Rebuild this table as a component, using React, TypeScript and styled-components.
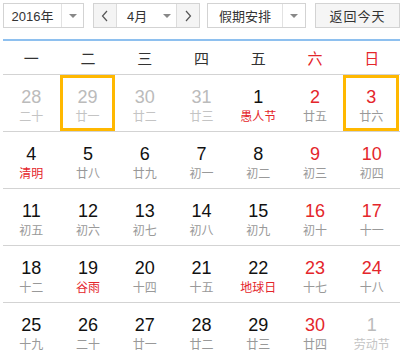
import styled, { createGlobalStyle } from 'styled-components';

const GlobalStyle = createGlobalStyle`
  html, body {
    margin: 0;
    padding: 0;
    background: #fff;
    font-family: 'Liberation Sans', 'Noto Sans CJK SC', Arial, sans-serif;
  }
`;

const RED = '#e4262b';

const Calendar = styled.div`
  width: 397px;
  padding: 3px 6px 0 3px;
`;

const Toolbar = styled.div`
  display: flex;
  height: 25px;
`;

const Select = styled.div<{ $width: number; $gap: number }>`
  display: flex;
  width: ${(p) => p.$width}px;
  margin-right: ${(p) => p.$gap}px;
  box-sizing: border-box;
  border: 1px solid #d3d3d3;
  background: #fff;
  font-size: 13px;
  color: #333;
`;

const SelectLabel = styled.div<{ $width: number }>`
  width: ${(p) => p.$width}px;
  display: flex;
  align-items: center;
  justify-content: center;
  border-right: 1px solid #e2e2e2;
`;

const Caret = styled.div`
  flex: 1;
  display: flex;
  align-items: center;
  justify-content: center;
  &::after {
    content: '';
    border-left: 4px solid transparent;
    border-right: 4px solid transparent;
    border-top: 4px solid #888;
  }
`;

const MonthGroup = styled.div`
  display: flex;
  width: 107px;
  margin-right: 7px;
  box-sizing: border-box;
  border: 1px solid #d3d3d3;
  font-size: 13px;
  color: #333;
`;

const Step = styled.div<{ $side: 'l' | 'r' }>`
  width: 22px;
  display: flex;
  align-items: center;
  justify-content: center;
  background: #f4f4f4;
  ${(p) => (p.$side === 'l' ? 'border-right: 1px solid #dcdcdc;' : 'border-left: 1px solid #dcdcdc;')}
`;

const MonthLabel = styled.div`
  flex: 1;
  display: flex;
  align-items: center;
  background: #fff;
  padding-left: 10px;
  gap: 16px;
  &::after {
    content: '';
    border-left: 4px solid transparent;
    border-right: 4px solid transparent;
    border-top: 4px solid #888;
  }
`;

const TodayButton = styled.button`
  width: 85px;
  height: 25px;
  padding: 0;
  border: 1px solid #d3d3d3;
  background: #f5f5f5;
  font-family: inherit;
  font-size: 13px;
  color: #333;
  letter-spacing: 1px;
`;

const WeekHead = styled.div`
  display: grid;
  grid-template-columns: repeat(7, 1fr);
  margin-top: 11px;
  border-top: 2px solid #8ec0ef;
  height: 33px;
`;

const WeekDay = styled.div<{ $red?: boolean }>`
  display: flex;
  align-items: center;
  justify-content: center;
  font-size: 15px;
  color: ${(p) => (p.$red ? RED : '#333')};
`;

const Row = styled.div`
  display: grid;
  grid-template-columns: repeat(7, 1fr);
  border-top: 1px solid #d3d3d3;
  height: 56px;
`;

const Cell = styled.div<{ $active?: boolean }>`
  box-sizing: border-box;
  display: flex;
  flex-direction: column;
  align-items: center;
  padding-top: ${(p) => (p.$active ? 8 : 11)}px;
  border: ${(p) => (p.$active ? '3px solid #ffb800' : 'none')};
  margin: 0 ${(p) => (p.$active ? 1 : 0)}px 0 0;
`;

const Num = styled.div<{ $tone: 'n' | 'r' | 'o' }>`
  font-size: 18px;
  line-height: 22px;
  color: ${(p) => (p.$tone === 'r' ? RED : p.$tone === 'o' ? '#bbbbbb' : '#111')};
`;

const Lunar = styled.div<{ $tone: 'n' | 'r' | 'o' }>`
  font-size: 12px;
  line-height: 16px;
  margin-top: 1px;
  color: ${(p) => (p.$tone === 'r' ? RED : p.$tone === 'o' ? '#c4c4c4' : '#999')};
`;

type Day = { d: number; l: string; other?: boolean; fest?: boolean; active?: boolean };

const rows: Day[][] = [
  [
    { d: 28, l: '二十', other: true },
    { d: 29, l: '廿一', other: true, active: true },
    { d: 30, l: '廿二', other: true },
    { d: 31, l: '廿三', other: true },
    { d: 1, l: '愚人节', fest: true },
    { d: 2, l: '廿五' },
    { d: 3, l: '廿六', active: true },
  ],
  [
    { d: 4, l: '清明', fest: true },
    { d: 5, l: '廿八' },
    { d: 6, l: '廿九' },
    { d: 7, l: '初一' },
    { d: 8, l: '初二' },
    { d: 9, l: '初三' },
    { d: 10, l: '初四' },
  ],
  [
    { d: 11, l: '初五' },
    { d: 12, l: '初六' },
    { d: 13, l: '初七' },
    { d: 14, l: '初八' },
    { d: 15, l: '初九' },
    { d: 16, l: '初十' },
    { d: 17, l: '十一' },
  ],
  [
    { d: 18, l: '十二' },
    { d: 19, l: '谷雨', fest: true },
    { d: 20, l: '十四' },
    { d: 21, l: '十五' },
    { d: 22, l: '地球日', fest: true },
    { d: 23, l: '十七' },
    { d: 24, l: '十八' },
  ],
  [
    { d: 25, l: '十九' },
    { d: 26, l: '二十' },
    { d: 27, l: '廿一' },
    { d: 28, l: '廿二' },
    { d: 29, l: '廿三' },
    { d: 30, l: '廿四' },
    { d: 1, l: '劳动节', other: true },
  ],
];

const weekdays = ['一', '二', '三', '四', '五', '六', '日'];

function Chevron({ dir }: { dir: 'l' | 'r' }) {
  return (
    <svg width="8" height="12" viewBox="0 0 8 12">
      <polyline
        points={dir === 'l' ? '6,1 1.5,6 6,11' : '2,1 6.5,6 2,11'}
        fill="none"
        stroke="#555"
        strokeWidth="1.2"
      />
    </svg>
  );
}

export default function App() {
  return (
    <>
      <GlobalStyle />
      <Calendar>
        <Toolbar>
          <Select $width={81} $gap={9}>
            <SelectLabel $width={57}>2016年</SelectLabel>
            <Caret />
          </Select>
          <MonthGroup>
            <Step $side="l">
              <Chevron dir="l" />
            </Step>
            <MonthLabel>4月</MonthLabel>
            <Step $side="r">
              <Chevron dir="r" />
            </Step>
          </MonthGroup>
          <Select $width={99} $gap={9}>
            <SelectLabel $width={74}>假期安排</SelectLabel>
            <Caret />
          </Select>
          <TodayButton>返回今天</TodayButton>
        </Toolbar>
        <WeekHead>
          {weekdays.map((w, i) => (
            <WeekDay key={w} $red={i >= 5}>
              {w}
            </WeekDay>
          ))}
        </WeekHead>
        {rows.map((row, ri) => (
          <Row key={ri}>
            {row.map((day, ci) => {
              const weekend = ci >= 5;
              const numTone = day.other ? 'o' : weekend ? 'r' : 'n';
              const lunarTone = day.other ? 'o' : day.fest ? 'r' : 'n';
              return (
                <Cell key={ci} $active={day.active}>
                  <Num $tone={numTone}>{day.d}</Num>
                  <Lunar $tone={lunarTone}>{day.l}</Lunar>
                </Cell>
              );
            })}
          </Row>
        ))}
      </Calendar>
    </>
  );
}
